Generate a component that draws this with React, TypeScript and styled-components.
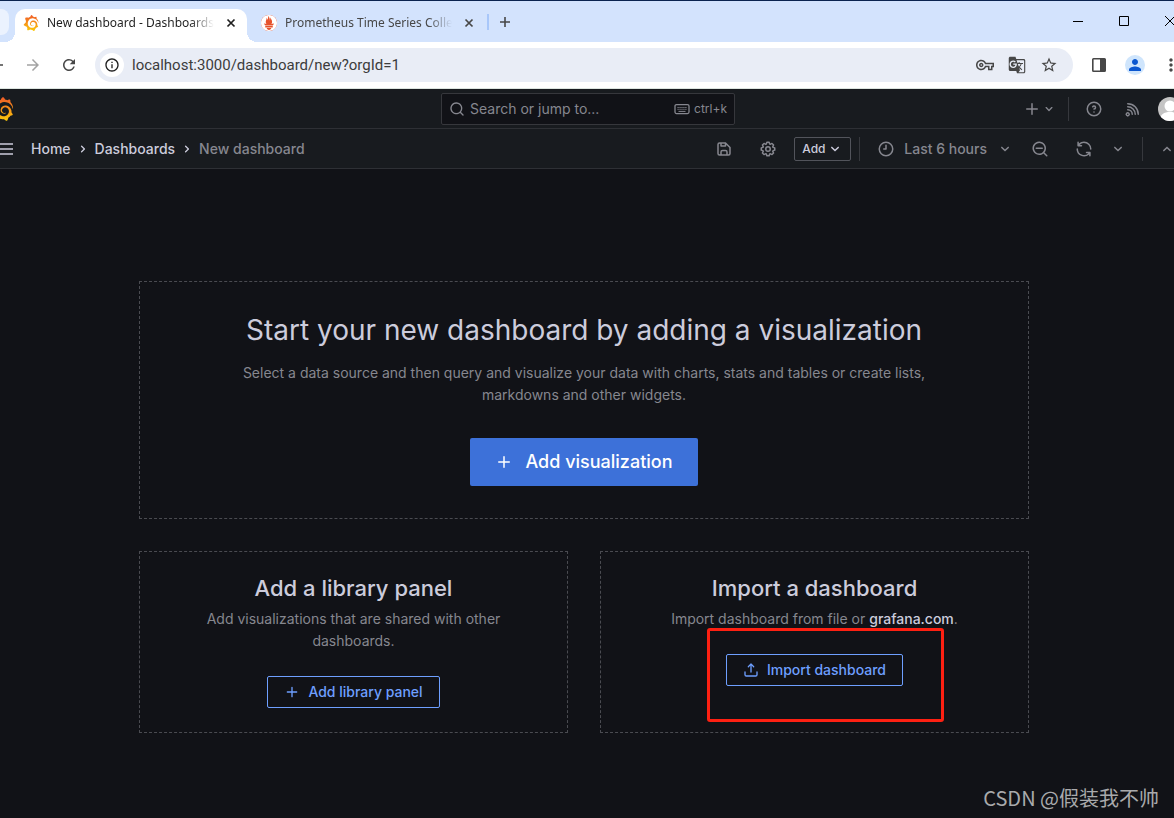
import React from "react";
import styled, { createGlobalStyle, css } from "styled-components";
import {
  MdArrowBack,
  MdArrowForward,
  MdRefresh,
  MdInfoOutline,
  MdGTranslate,
  MdStarBorder,
  MdPerson,
  MdMoreVert,
  MdOutlineVpnKey,
} from "react-icons/md";
import { SiGrafana, SiPrometheus } from "react-icons/si";

const GlobalStyle = createGlobalStyle`
  *, *::before, *::after { box-sizing: border-box; }
  body {
    margin: 0;
    background: #111217;
    color: #ccccdc;
    font-family: Inter, "Liberation Sans", sans-serif;
    font-size: 14px;
    line-height: 22px;
  }
  button, input { font: inherit; color: inherit; }
  button { border: 0; background: none; padding: 0; cursor: pointer; }
  h1, h2, p { margin: 0; }
  a { color: inherit; text-decoration: none; }
`;

const paths = {
  plus: "M19,11H13V5a1,1,0,0,0-2,0v6H5a1,1,0,0,0,0,2h6v6a1,1,0,0,0,2,0V13h6a1,1,0,0,0,0-2Z",
  down: "M17,9.17a1,1,0,0,0-1.41,0L12,12.71,8.46,9.17a1,1,0,0,0-1.41,0,1,1,0,0,0,0,1.42l4.24,4.24a1,1,0,0,0,1.42,0L17,10.59A1,1,0,0,0,17,9.17Z",
  up: "M17,13.41,12.71,9.17a1,1,0,0,0-1.42,0L7.05,13.41a1,1,0,0,0,0,1.42,1,1,0,0,0,1.41,0L12,11.29l3.54,3.54a1,1,0,0,0,.7.29,1,1,0,0,0,.71-.29A1,1,0,0,0,17,13.41Z",
  right: "M14.83,11.29,10.59,7.05a1,1,0,0,0-1.42,0,1,1,0,0,0,0,1.41L12.71,12,9.17,15.54a1,1,0,0,0,0,1.41,1,1,0,0,0,.71.29,1,1,0,0,0,.71-.29l4.24-4.24A1,1,0,0,0,14.83,11.29Z",
  search: "M21.71,20.29,18,16.61A9,9,0,1,0,16.61,18l3.68,3.68a1,1,0,0,0,1.42,0A1,1,0,0,0,21.71,20.29ZM11,18a7,7,0,1,1,7-7A7,7,0,0,1,11,18Z",
  zoomOut: "M21.71,20.29,18,16.61A9,9,0,1,0,16.61,18l3.68,3.68a1,1,0,0,0,1.42,0A1,1,0,0,0,21.71,20.29ZM11,18a7,7,0,1,1,7-7A7,7,0,0,1,11,18Zm4-8H7a1,1,0,0,0,0,2h8a1,1,0,0,0,0-2Z",
  clock: "M12,2A10,10,0,1,0,22,12,10,10,0,0,0,12,2Zm0,18a8,8,0,1,1,8-8A8,8,0,0,1,12,20ZM12,6a1,1,0,0,0-1,1v4H9a1,1,0,0,0,0,2h3a1,1,0,0,0,1-1V7A1,1,0,0,0,12,6Z",
  sync: "M19.91,15.51H15.38a1,1,0,0,0,0,2h2.4A8,8,0,0,1,4,12a1,1,0,1,0-2,0,10,10,0,0,0,16.88,7.23V21a1,1,0,0,0,2,0V16.5A1,1,0,0,0,19.91,15.51ZM12,2A10,10,0,0,0,5.12,4.77V3a1,1,0,0,0-2,0V7.5a1,1,0,0,0,1,1h4.5a1,1,0,0,0,0-2H6.22A8,8,0,0,1,20,12a1,1,0,0,0,2,0A10,10,0,0,0,12,2Z",
  help: "M11.29,15.29a1.58,1.58,0,0,0-.12.15.76.76,0,0,0-.09.18.64.64,0,0,0-.06.18,1.36,1.36,0,0,0,0,.2.84.84,0,0,0,.08.38.9.9,0,0,0,.54.54.94.94,0,0,0,.76,0,.9.9,0,0,0,.54-.54A1,1,0,0,0,13,16a1,1,0,0,0-.29-.71A1,1,0,0,0,11.29,15.29ZM12,2A10,10,0,1,0,22,12,10,10,0,0,0,12,2Zm0,18a8,8,0,1,1,8-8A8,8,0,0,1,12,20ZM12,7A3,3,0,0,0,9.4,8.5a1,1,0,1,0,1.73,1A1,1,0,0,1,12,9a1,1,0,0,1,0,2,1,1,0,1,0,0,2,3,3,0,0,0,0-6Z",
  rss: "M2.88,16.88a3,3,0,0,0,0,4.24,3,3,0,0,0,4.24,0,3,3,0,0,0-4.24-4.24Zm2.83,2.83a1,1,0,0,1-1.42-1.42,1,1,0,0,1,1.42,0A1,1,0,0,1,5.71,19.71ZM5,12a1,1,0,0,0,0,2,5,5,0,0,1,5,5,1,1,0,0,0,2,0,7,7,0,0,0-7-7ZM5,8a1,1,0,0,0,0,2,9,9,0,0,1,9,9,1,1,0,0,0,2,0,11.08,11.08,0,0,0-3.22-7.78A11.08,11.08,0,0,0,5,8Zm10.61.39A15,15,0,0,0,5,4,1,1,0,0,0,5,6,13,13,0,0,1,18,19a1,1,0,0,0,2,0A14.92,14.92,0,0,0,15.61,8.39Z",
  save: "M20.71,9.29l-6-6a1,1,0,0,0-.32-.21A1.09,1.09,0,0,0,14,3H6A3,3,0,0,0,3,6V18a3,3,0,0,0,3,3H18a3,3,0,0,0,3-3V10A1,1,0,0,0,20.71,9.29ZM9,5h4V7H9Zm6,14H9V16a1,1,0,0,1,1-1h4a1,1,0,0,1,1,1Zm4-1a1,1,0,0,1-1,1H17V16a3,3,0,0,0-3-3H10a3,3,0,0,0-3,3v3H6a1,1,0,0,1-1-1V6A1,1,0,0,1,6,5H7V8A1,1,0,0,0,8,9h6a1,1,0,0,0,1-1V6.41l4,4Z",
  upload: "M8.71,7.71,11,5.41V15a1,1,0,0,0,2,0V5.41l2.29,2.3a1,1,0,0,0,1.42,0,1,1,0,0,0,0-1.42l-4-4a1,1,0,0,0-.33-.21,1,1,0,0,0-.76,0,1,1,0,0,0-.33.21l-4,4A1,1,0,1,0,8.71,7.71ZM21,14a1,1,0,0,0-1,1v4a1,1,0,0,1-1,1H5a1,1,0,0,1-1-1V15a1,1,0,0,0-2,0v4a3,3,0,0,0,3,3H19a3,3,0,0,0,3-3V15A1,1,0,0,0,21,14Z",
  cog: "M21.32,9.55l-1.89-.63.89-1.78A1,1,0,0,0,20.13,6L18,3.87a1,1,0,0,0-1.15-.19l-1.78.89-.63-1.89A1,1,0,0,0,13.5,2h-3a1,1,0,0,0-.95.68L8.92,4.57,7.14,3.68A1,1,0,0,0,6,3.87L3.87,6a1,1,0,0,0-.19,1.15l.89,1.78-1.89.63A1,1,0,0,0,2,10.5v3a1,1,0,0,0,.68.95l1.89.63-.89,1.78A1,1,0,0,0,3.87,18L6,20.13a1,1,0,0,0,1.15.19l1.78-.89.63,1.89a1,1,0,0,0,.95.68h3a1,1,0,0,0,.95-.68l.63-1.89,1.78.89A1,1,0,0,0,18,20.13L20.13,18a1,1,0,0,0,.19-1.15l-.89-1.78,1.89-.63A1,1,0,0,0,22,13.5v-3A1,1,0,0,0,21.32,9.55ZM20,12.78l-1.2.4A2,2,0,0,0,17.64,16l.57,1.14-1.1,1.1L16,17.64a2,2,0,0,0-2.79,1.16l-.4,1.2H11.22l-.4-1.2A2,2,0,0,0,8,17.64l-1.14.57-1.1-1.1L6.36,16A2,2,0,0,0,5.2,13.18L4,12.78V11.22l1.2-.4A2,2,0,0,0,6.36,8L5.79,6.89l1.1-1.1L8,6.36A2,2,0,0,0,10.82,5.2l.4-1.2h1.56l.4,1.2A2,2,0,0,0,16,6.36l1.14-.57,1.1,1.1L17.64,8a2,2,0,0,0,1.16,2.79l1.2.4ZM12,8a4,4,0,1,0,4,4A4,4,0,0,0,12,8Zm0,6a2,2,0,1,1,2-2A2,2,0,0,1,12,14Z",
};

const Svg = styled.svg`
  display: block;
  flex: none;
  fill: currentColor;
`;

function Icon({ name, size = 18 }: { name: keyof typeof paths; size?: number }) {
  return (
    <Svg viewBox="0 0 24 24" width={size} height={size} aria-hidden="true">
      <path d={paths[name]} />
    </Svg>
  );
}

const Page = styled.div`
  position: relative;
  min-height: 100vh;
  overflow: hidden;
`;

/* ---------- browser window ---------- */

const TabStrip = styled.div`
  display: flex;
  align-items: stretch;
  height: 42px;
  padding-top: 8px;
  border-top: 1px solid #0a2350;
  background: #d3e3fd;
  color: #474747;
  font-family: "Noto Sans", "Open Sans", sans-serif;
  font-size: 12px;
  line-height: 18px;
`;

const EdgeTab = styled.div`
  width: 9px;
  height: 26px;
  margin-right: 6px;
  border-radius: 0 8px 8px 0;
  background: #ebf2fe;
`;

const Tab = styled.div<{ $active?: boolean }>`
  position: relative;
  display: flex;
  align-items: center;
  gap: 8px;
  width: ${(p) => (p.$active ? 232 : 240)}px;
  padding: 0 11px 6px 8px;
  ${(p) =>
    p.$active
      ? css`
          border-radius: 10px 10px 0 0;
          background: #fff;
          color: #1f1f1f;
          &::before,
          &::after {
            content: "";
            position: absolute;
            bottom: 0;
            width: 10px;
            height: 10px;
          }
          &::before {
            right: 100%;
            background: radial-gradient(circle at 0 0, transparent 10px, #fff 10px);
          }
          &::after {
            left: 100%;
            background: radial-gradient(circle at 100% 0, transparent 10px, #fff 10px);
          }
        `
      : css`
          padding-left: 14px;
          padding-right: 13px;
        `}
`;

const TabTitle = styled.span`
  flex: 1;
  min-width: 0;
  overflow: hidden;
  white-space: nowrap;
  mask-image: linear-gradient(to right, #000 calc(100% - 24px), transparent);
`;

const TabClose = styled.button`
  width: 10px;
  height: 10px;
  margin-left: 4px;
`;

const TabDivider = styled.span`
  width: 2px;
  height: 16px;
  margin: 5px 10px 0 0;
  background: #a8c7fa;
`;

const NewTab = styled.button`
  height: 26px;
`;

const WindowControls = styled.div`
  display: flex;
  gap: 36px;
  height: 24px;
  margin: 0 -1px 0 auto;
  color: #000;
`;

const Favicon = styled.span`
  display: grid;
  place-items: center;
  flex: none;
  width: 16px;
  height: 16px;
`;

const PrometheusBadge = styled(Favicon)`
  border-radius: 50%;
  background: #e6522c;
  color: #fff;
`;

const NavBar = styled.div`
  display: flex;
  align-items: center;
  height: 47px;
  border-bottom: 1px solid #dde5e0;
  background: #fff;
  color: #474747;
`;

const NavButton = styled.button<{ $faded?: boolean }>`
  display: grid;
  place-items: center;
  flex: none;
  width: 36px;
  height: 36px;
  color: ${(p) => (p.$faded ? "#a3a3a3" : "#474747")};
`;

const BackButton = styled(NavButton)`
  margin-left: -21px;
`;

const AddressBar = styled.label`
  display: flex;
  align-items: center;
  flex: 1;
  height: 34px;
  margin-left: 8px;
  padding: 0 8px 0 5px;
  border-radius: 17px;
  background: #e9edf6;
`;

const SiteInfo = styled.span`
  display: grid;
  place-items: center;
  width: 24px;
  height: 24px;
  margin-right: 8px;
  border-radius: 50%;
  background: #fff;
  color: #1f1f1f;
`;

const AddressInput = styled.input`
  flex: 1;
  min-width: 0;
  padding: 0;
  border: 0;
  outline: 0;
  background: none;
  color: #3c3c3c;
  font-family: Roboto, "Open Sans", sans-serif;
  font-size: 15px;
  line-height: 20px;
`;

const AddressAction = styled.button`
  display: grid;
  place-items: center;
  width: 32px;
  height: 32px;
`;

const NavTail = styled.div`
  display: flex;
  align-items: center;
  margin: 0 -15px 0 8px;
`;

const ProfileDisc = styled.span`
  display: grid;
  place-items: center;
  width: 20px;
  height: 20px;
  border-radius: 50%;
  background: #cfe5fc;
  color: #0b57d0;
`;

/* ---------- application header ---------- */

const secondary = "#86878f";

const TopBar = styled.header`
  display: grid;
  grid-template-columns: 1fr 294px 1fr;
  align-items: center;
  height: 40px;
  padding-left: 2px;
  border-bottom: 1px solid #2e3035;
  background: #181b1f;
  color: ${secondary};
`;

const HomeLink = styled.a`
  width: 24px;
  height: 24px;
  margin-left: -12px;
`;

const SearchBox = styled.label`
  display: flex;
  align-items: center;
  gap: 5px;
  height: 32px;
  padding: 0 7px;
  border: 1px solid #36373c;
  border-radius: 2px;
  background: #111217;
`;

const SearchInput = styled.input`
  flex: 1;
  min-width: 0;
  padding: 0;
  border: 0;
  outline: 0;
  background: none;
  &::placeholder {
    color: ${secondary};
    opacity: 1;
  }
`;

const Shortcut = styled.span`
  display: flex;
  align-items: center;
  gap: 4px;
  font-size: 12px;
  line-height: 18px;
`;

const TopActions = styled.div`
  display: flex;
  align-items: center;
  justify-content: flex-end;
  gap: 11px;
  margin-right: -8px;
`;

const CreateButton = styled.button`
  display: flex;
  align-items: center;
`;

const IconButton = styled.button<{ $width?: number }>`
  display: grid;
  place-items: center;
  flex: none;
  width: ${(p) => p.$width ?? 36}px;
  height: 24px;
`;

const Divider = styled.span`
  flex: none;
  width: 1px;
  height: 24px;
  background: #36383d;
`;

const Avatar = styled.button`
  width: 24px;
  height: 24px;
  border-radius: 50%;
  overflow: hidden;
  background: #c4c4c4;
`;

const ToolBar = styled.div`
  display: flex;
  align-items: center;
  gap: 8px;
  height: 40px;
  border-bottom: 1px solid #2e3035;
  background: #181b1f;
  color: ${secondary};
`;

const MenuButton = styled.button`
  width: 16px;
  margin-left: -3px;
  color: #ccccdc;
`;

const Breadcrumbs = styled.nav`
  display: flex;
  align-items: center;
  gap: 4px;
  margin: 0 auto 0 10px;
  font-weight: 500;
  color: #ccccdc;
`;

const CurrentCrumb = styled.span`
  color: ${secondary};
`;

const AddButton = styled.button`
  display: flex;
  align-items: center;
  height: 24px;
  width: 57px;
  padding: 0 8px 0 7px;
  border: 1px solid #52545b;
  border-radius: 2px;
  color: #ccccdc;
  font-size: 12px;
  font-weight: 500;
`;

const TimePicker = styled.button`
  display: flex;
  align-items: center;
  gap: 9px;
  padding-left: 9px;
  font-weight: 500;
`;

const RefreshGroup = styled.div`
  display: flex;
`;

const CollapseButton = styled(IconButton)`
  margin-right: -9px;
`;

/* ---------- empty dashboard ---------- */

const MainFrame = styled.main`
  padding: 0 22px 48px 16px;
`;

const CardGrid = styled.div`
  display: grid;
  grid-template-columns: 1fr 1fr;
  gap: 32px;
  max-width: 890px;
  margin: 0 auto;
  padding-top: 112px;
`;

const Card = styled.section<{ $large?: boolean }>`
  display: flex;
  flex-direction: column;
  align-items: center;
  grid-column: ${(p) => (p.$large ? "1 / -1" : "auto")};
  padding: ${(p) => (p.$large ? 32 : 24)}px;
  border: 1px dashed #4a4b51;
  text-align: center;
`;

const LargeTitle = styled.h1`
  margin-bottom: 16px;
  font-size: 28px;
  font-weight: 400;
  line-height: 32px;
`;

const Title = styled.h2`
  margin-bottom: 8px;
  font-size: 22px;
  font-weight: 500;
  line-height: 24px;
`;

const Text = styled.p<{ $gap: number }>`
  max-width: 720px;
  margin-bottom: ${(p) => p.$gap}px;
  color: ${secondary};
  a {
    color: #ccccdc;
    font-weight: 500;
  }
`;

const PrimaryButton = styled.button`
  display: flex;
  align-items: center;
  gap: 12px;
  height: 48px;
  padding: 0 25px;
  border-radius: 2px;
  background: #3d71d9;
  color: #fff;
  font-size: 18px;
  font-weight: 500;
`;

const OutlineButton = styled.button`
  display: flex;
  align-items: center;
  gap: 8px;
  height: 32px;
  padding: 0 16px;
  border: 1px solid #6e9fff;
  border-radius: 2px;
  color: #6e9fff;
  font-weight: 500;
`;

const Highlighted = styled.div`
  position: relative;
`;

/* Red annotation frame drawn over the import button. */
const Marker = styled.span`
  position: absolute;
  inset: -26px -41px -36px -19px;
  border: 3px solid #fe2012;
  border-radius: 3px;
  pointer-events: none;
`;

const Watermark = styled.span`
  position: absolute;
  right: 15px;
  bottom: 8px;
  color: #a9aaac;
  font-family: "Noto Sans CJK SC", sans-serif;
  font-size: 20px;
  line-height: 24px;
`;

function GrafanaLogo({ size }: { size: number }) {
  return <SiGrafana size={size} fill="url(#flame)" aria-hidden="true" />;
}

function Cross() {
  return (
    <Svg viewBox="0 0 10 10" width="10" height="10" aria-hidden="true">
      <path d="M1.500 1.500l7 7M8.500 1.500l-7 7" fill="none" stroke="currentColor" strokeWidth="1.700" />
    </Svg>
  );
}

export default function App() {
  return (
    <Page>
      <GlobalStyle />
      <TabStrip>
        <EdgeTab />
        <Tab $active>
          <Favicon><GrafanaLogo size={16} /></Favicon>
          <TabTitle>New dashboard - Dashboards</TabTitle>
          <TabClose aria-label="Close tab"><Cross /></TabClose>
        </Tab>
        <Tab>
          <PrometheusBadge><SiPrometheus size={16} /></PrometheusBadge>
          <TabTitle>Prometheus Time Series Collection</TabTitle>
          <TabClose aria-label="Close tab"><Cross /></TabClose>
        </Tab>
        <TabDivider />
        <NewTab aria-label="New tab">
          <Svg viewBox="0 0 12 12" width="12" height="12">
            <path d="M6 1v10M1 6h10" stroke="currentColor" strokeWidth="1.600" />
          </Svg>
        </NewTab>
        <WindowControls>
          <button aria-label="Minimize">
            <Svg viewBox="0 0 10 10" width="10" height="10"><path d="M0 5.500h10" stroke="currentColor" /></Svg>
          </button>
          <button aria-label="Maximize">
            <Svg viewBox="0 0 10 10" width="10" height="10"><path d="M.5.5h9v9h-9z" fill="none" stroke="currentColor" /></Svg>
          </button>
          <button aria-label="Close window">
            <Svg viewBox="0 0 10 10" width="10" height="10"><path d="M0 0l10 10M10 0L0 10" stroke="currentColor" /></Svg>
          </button>
        </WindowControls>
      </TabStrip>

      <NavBar>
        <BackButton aria-label="Back"><MdArrowBack size={18} /></BackButton>
        <NavButton $faded aria-label="Forward"><MdArrowForward size={18} /></NavButton>
        <NavButton aria-label="Reload"><MdRefresh size={18} /></NavButton>
        <AddressBar>
          <SiteInfo><MdInfoOutline size={16} /></SiteInfo>
          <AddressInput aria-label="Address" defaultValue="localhost:3000/dashboard/new?orgId=1" />
          <AddressAction aria-label="Passwords"><MdOutlineVpnKey size={18} /></AddressAction>
          <AddressAction aria-label="Translate"><MdGTranslate size={18} /></AddressAction>
          <AddressAction aria-label="Bookmark"><MdStarBorder size={18} /></AddressAction>
        </AddressBar>
        <NavTail>
          <NavButton aria-label="Side panel">
            <Svg viewBox="0 0 14 14" width="14" height="14">
              <path fillRule="evenodd" d="M1.500 0h11A1.500 1.500 0 0 1 14 1.500v11a1.500 1.500 0 0 1-1.500 1.500h-11A1.500 1.500 0 0 1 0 12.500v-11A1.500 1.500 0 0 1 1.500 0zM1.600 1.600v10.800H8V1.600z" />
            </Svg>
          </NavButton>
          <NavButton aria-label="Profile"><ProfileDisc><MdPerson size={18} /></ProfileDisc></NavButton>
          <NavButton aria-label="Menu"><MdMoreVert size={20} /></NavButton>
        </NavTail>
      </NavBar>

      <TopBar>
        <HomeLink href="#home" aria-label="Grafana home"><GrafanaLogo size={24} /></HomeLink>
        <SearchBox>
          <Icon name="search" size={16} />
          <SearchInput aria-label="Search" placeholder="Search or jump to..." />
          <Shortcut>
            <Svg viewBox="0 0 16 16" width="16" height="16" aria-hidden="true">
              <rect x="1" y="3.600" width="14" height="9" rx="1.500" fill="none" stroke="currentColor" strokeWidth="1.300" />
              <path d="M3.500 6.500h9M3.500 8.300h9" stroke="currentColor" strokeDasharray="1.200 .75" />
              <path d="M4.500 10.400h7" stroke="currentColor" />
            </Svg>
            ctrl+k
          </Shortcut>
        </SearchBox>
        <TopActions>
          <CreateButton aria-label="New"><Icon name="plus" /><Icon name="down" size={16} /></CreateButton>
          <Divider />
          <IconButton $width={28} aria-label="Help"><Icon name="help" /></IconButton>
          <IconButton $width={28} aria-label="News"><Icon name="rss" /></IconButton>
          <Avatar aria-label="Account">
            <Svg viewBox="0 0 24 24" width="24" height="24">
              <circle cx="12" cy="9" r="5.500" fill="#fff" />
              <path d="M2 24c0-7 4-9 10-9s10 2 10 9z" fill="#fff" />
            </Svg>
          </Avatar>
        </TopActions>
      </TopBar>

      <ToolBar>
        <MenuButton aria-label="Open menu">
          <Svg viewBox="0 0 16 16" width="16" height="16">
            <path d="M0 3h16M0 8h16M0 13h16" stroke="currentColor" strokeWidth="1.600" />
          </Svg>
        </MenuButton>
        <Breadcrumbs aria-label="Breadcrumbs">
          <a href="#home">Home</a>
          <Icon name="right" size={16} />
          <a href="#dashboards">Dashboards</a>
          <Icon name="right" size={16} />
          <CurrentCrumb>New dashboard</CurrentCrumb>
        </Breadcrumbs>
        <IconButton aria-label="Save dashboard"><Icon name="save" /></IconButton>
        <IconButton aria-label="Dashboard settings"><Icon name="cog" /></IconButton>
        <AddButton>Add<Icon name="down" /></AddButton>
        <Divider />
        <TimePicker><Icon name="clock" />Last 6 hours<Icon name="down" /></TimePicker>
        <IconButton aria-label="Zoom out"><Icon name="zoomOut" /></IconButton>
        <RefreshGroup>
          <IconButton aria-label="Refresh"><Icon name="sync" /></IconButton>
          <IconButton $width={32} aria-label="Refresh interval"><Icon name="down" /></IconButton>
        </RefreshGroup>
        <Divider />
        <CollapseButton $width={32} aria-label="Collapse header"><Icon name="up" /></CollapseButton>
      </ToolBar>

      <MainFrame>
        <CardGrid>
          <Card $large>
            <LargeTitle>Start your new dashboard by adding a visualization</LargeTitle>
            <Text $gap={32}>
              Select a data source and then query and visualize your data with charts, stats and tables or
              create lists, markdowns and other widgets.
            </Text>
            <PrimaryButton><Icon name="plus" />Add visualization</PrimaryButton>
          </Card>
          <Card>
            <Title>Add a library panel</Title>
            <Text $gap={24}>Add visualizations that are shared with other dashboards.</Text>
            <OutlineButton><Icon name="plus" size={16} />Add library panel</OutlineButton>
          </Card>
          <Card>
            <Title>Import a dashboard</Title>
            <Text $gap={24}>
              Import dashboard from file or <a href="https://grafana.com">grafana.com</a>.
            </Text>
            <Highlighted>
              <OutlineButton><Icon name="upload" size={16} />Import dashboard</OutlineButton>
              <Marker />
            </Highlighted>
          </Card>
        </CardGrid>
      </MainFrame>

      <Watermark>CSDN @假装我不帅</Watermark>

      <svg width="0" height="0" display="block" aria-hidden="true">
        <linearGradient id="flame" x1="0" y1="0" x2="0" y2="1">
          <stop offset="0" stopColor="#f05a28" />
          <stop offset="1" stopColor="#fbca0a" />
        </linearGradient>
      </svg>
    </Page>
  );
}
